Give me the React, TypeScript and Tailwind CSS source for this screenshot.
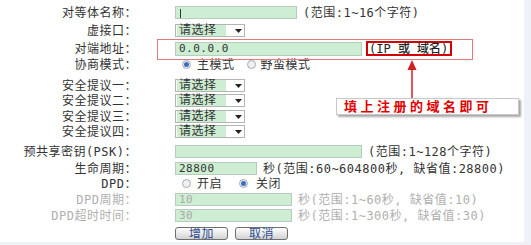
import type { ReactNode } from "react";

function Row({
  label,
  dim,
  className,
  children,
}: {
  label?: string;
  dim?: boolean;
  className: string;
  children: ReactNode;
}) {
  return (
    <div className={`flex h-[15px] items-center ${className}`}>
      <div className={`w-[137px] shrink-0 whitespace-nowrap text-right ${dim ? "text-[#b0b0b0]" : "text-[#333]"}`}>
        {label}
      </div>
      <div className="ml-[38px] flex items-center whitespace-nowrap">{children}</div>
    </div>
  );
}

function Select() {
  return (
    <div className="flex h-[13px] w-[70px] items-center border border-[#b4b4b4] bg-white pl-[1px]">
      <span className="h-[11px] w-[49px] bg-[#cdeed2] pl-[2px] text-[12px] leading-[11px] text-[#333]">请选择</span>
      <svg width="7" height="4" viewBox="0 0 7 4" className="ml-[9px]">
        <path d="M0 0h7L3.5 4z" fill="#222" />
      </svg>
    </div>
  );
}

function Radio({ checked }: { checked?: boolean }) {
  return (
    <span className="inline-flex h-[9px] w-[9px] items-center justify-center rounded-full border border-[#a4acb4] bg-[#eef0f2]">
      {checked && <span className="h-[5px] w-[5px] rounded-full bg-[#3c6cc8]" />}
    </span>
  );
}

function Button({ label, className }: { label: string; className?: string }) {
  return (
    <div
      className={`flex h-[13px] w-[53px] items-center justify-center rounded-[3px] border border-[#6e6e6e] bg-linear-to-b from-white to-[#d2d2d2] text-[12px] leading-none text-[#2d4f8f] ${className ?? ""}`}
    >
      {label}
    </div>
  );
}

export default function App() {
  const box = "border border-[#b8ccbb] bg-[#cdeed2] pl-[3px] leading-none";

  return (
    <div className="h-[245px] w-[531px] bg-[#eef2f8] font-['DejaVu_Sans_Mono','Noto_Sans_CJK_SC',sans-serif] text-[12px] tracking-[0.5px]">
      <div className="relative flex h-[242px] w-[524px] flex-col bg-white">
        <Row label="对等体名称：" className="mt-[5px]">
          <div className={`h-[13px] w-[122px] ${box}`}>
            <span className="ml-[1px] inline-block h-[9px] w-px bg-[#333] align-middle" />
          </div>
          <span className="ml-[6px] text-[#333]">(范围:1~16个字符)</span>
        </Row>

        <Row label="虚接口：" className="mt-[3px]">
          <Select />
        </Row>

        <Row label="对端地址：" className="mt-[3px]">
          <div className={`flex h-[14px] w-[187px] items-center text-[11px] text-[#333] ${box}`}>0.0.0.0</div>
          <span className="ml-[4px] flex h-[15px] w-[86px] items-center border-2 border-[#d40000] pl-[1px] font-medium tracking-normal text-[#222]">
            (IP 或 域名)
          </span>
        </Row>

        <Row label="协商模式：" className="mt-[1px]">
          <span className="ml-[7px] flex items-center">
            <Radio checked />
          </span>
          <span className="ml-[6px] text-[#333]">主模式</span>
          <span className="ml-[12px] flex items-center">
            <Radio />
          </span>
          <span className="ml-[5px] text-[#333]">野蛮模式</span>
        </Row>

        <Row label="安全提议一：" className="mt-[6px]">
          <Select />
        </Row>
        <Row label="安全提议二：" className="mt-0">
          <Select />
        </Row>
        <Row label="安全提议三：" className="mt-[1px]">
          <Select />
        </Row>
        <Row label="安全提议四：" className="mt-0">
          <Select />
        </Row>

        <Row label="预共享密钥(PSK)：" className="mt-[5px]">
          <div className={`h-[13px] w-[187px] ${box}`} />
          <span className="ml-[6px] text-[#333]">(范围:1~128个字符)</span>
        </Row>

        <Row label="生命周期：" className="mt-[2px]">
          <div className={`flex h-[13px] w-[82px] items-center text-[11px] text-[#333] ${box}`}>28800</div>
          <span className="ml-[6px] text-[#333]">秒(范围:60~604800秒, 缺省值:28800)</span>
        </Row>

        <Row label="DPD：" className="mt-0">
          <span className="ml-[7px] flex items-center">
            <Radio />
          </span>
          <span className="ml-[6px] text-[#333]">开启</span>
          <span className="ml-[17px] flex items-center">
            <Radio checked />
          </span>
          <span className="ml-[8px] text-[#333]">关闭</span>
        </Row>

        <Row label="DPD周期：" dim className="mt-[1px]">
          <div className={`flex h-[13px] w-[117px] items-center text-[11px] text-[#aaa] ${box}`}>10</div>
          <span className="ml-[6px] text-[#b0b0b0]">秒(范围:1~60秒, 缺省值:10)</span>
        </Row>

        <Row label="DPD超时时间：" dim className="mt-[1px]">
          <div className={`flex h-[13px] w-[117px] items-center text-[11px] text-[#aaa] ${box}`}>30</div>
          <span className="ml-[6px] text-[#b0b0b0]">秒(范围:1~300秒, 缺省值:30)</span>
        </Row>

        <Row className="mt-[3px]">
          <Button label="增加" />
          <Button label="取消" className="ml-[7px]" />
        </Row>

        {/* annotation overlays */}
        <div className="pointer-events-none absolute left-[157px] top-[39px] h-[21px] w-[316px] border border-[#e27a7a]" />
        <svg className="absolute left-[406px] top-[59px]" width="12" height="40" viewBox="0 0 12 40">
          <path d="M6 1L1.5 11h9z" fill="#d42020" />
          <path d="M6 10v29" stroke="#d42020" strokeWidth="1.5" />
        </svg>
        <div className="absolute left-[336px] top-[98px] flex h-[17px] w-[183px] items-center border border-[#c8c8c8] bg-white pl-[7px] text-[13px] font-bold tracking-[3.5px] text-[#e00000] shadow-[2px_2px_2px_rgba(0,0,0,0.35)]">
          填上注册的域名即可
        </div>
      </div>
    </div>
  );
}
